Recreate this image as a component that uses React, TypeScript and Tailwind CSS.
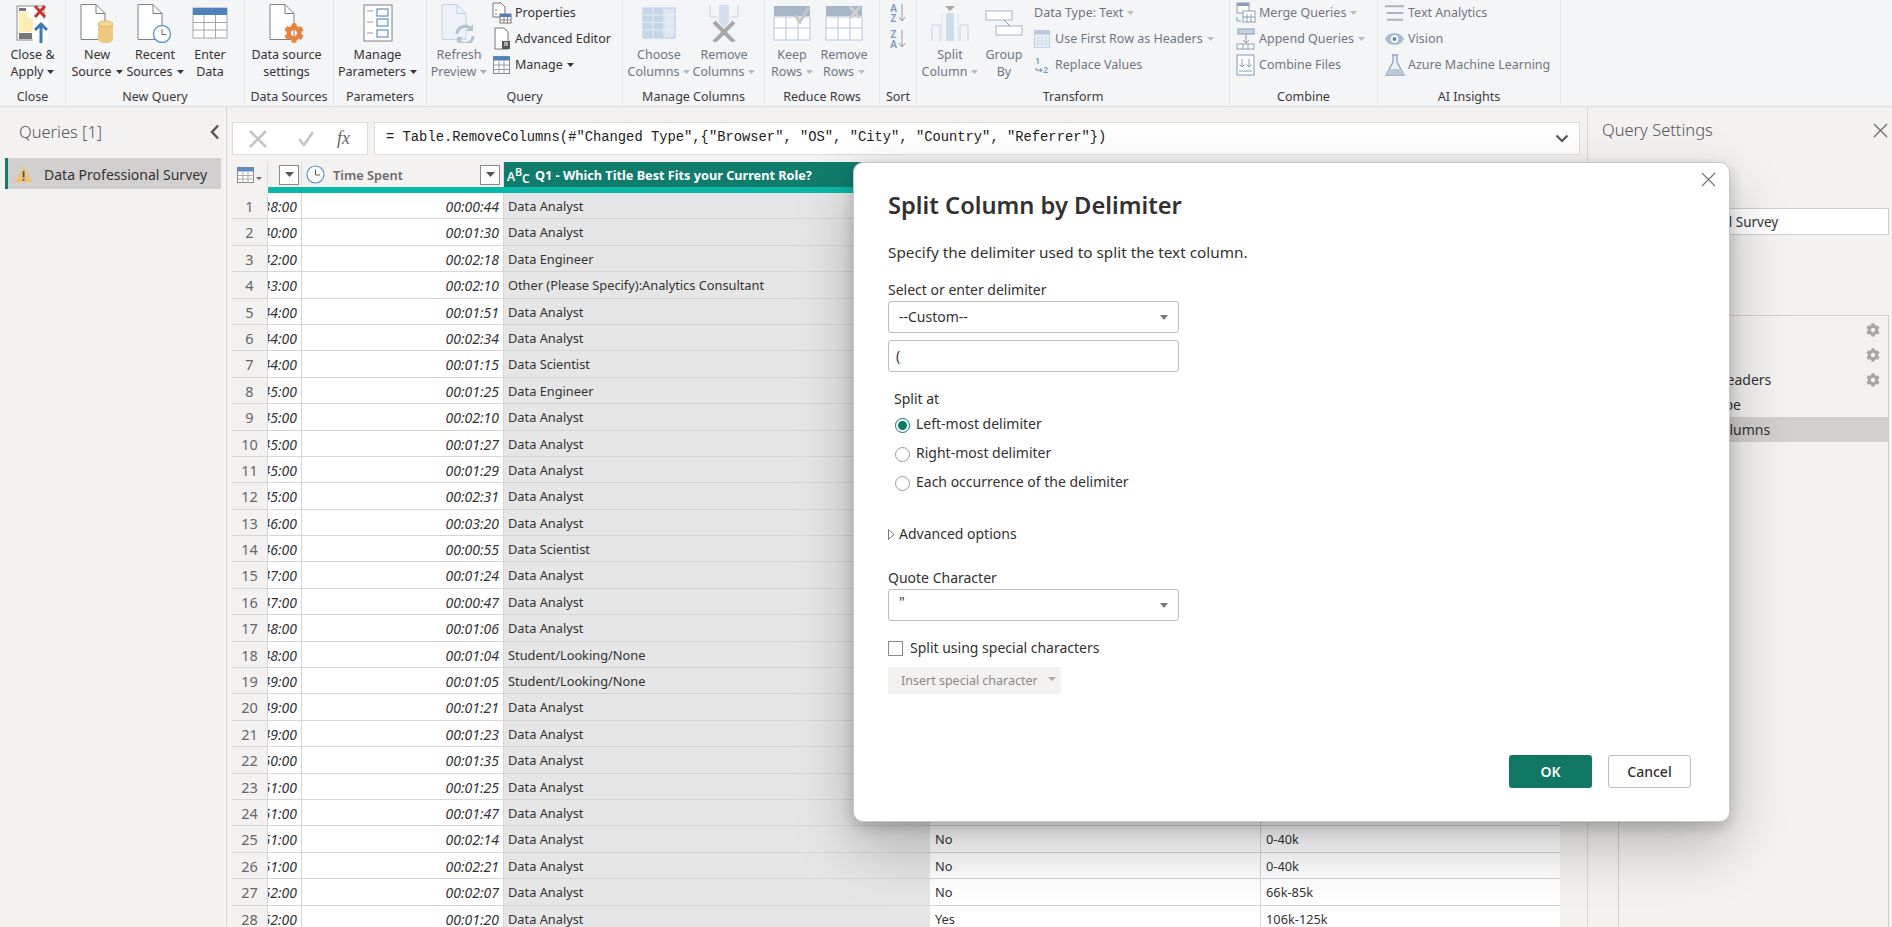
import React from "react";
import { FaCog } from "react-icons/fa";

const S = "font-['Noto_Sans','Open_Sans',sans-serif]";

function Caret({ c = "#333" }: { c?: string }) {
  return (
    <svg width="7" height="4" viewBox="0 0 7 4" className="ml-[4px] inline-block align-middle shrink-0">
      <path d="M0 0h7L3.5 4z" fill={c} />
    </svg>
  );
}

function Page({ c = "#7f7f7f", f = "#fff", x = 1 }: { c?: string; f?: string; x?: number }) {
  return (
    <g>
      <path d={`M${x} 1.5h15l9 9v26h-24z`} fill={f} stroke={c} />
      <path d={`M${x + 15} 1.5v9h9`} fill="none" stroke={c} />
    </g>
  );
}

const CloseApplyIcon = () => (
  <svg width="34" height="40" viewBox="0 0 34 40">
    <rect x="1" y="3" width="27" height="34" fill="#fff" stroke="#8c8c8c" />
    <path d="M3 9h8v5l10 3-6 12H3z" fill="#fbeeb0" />
    <rect x="3" y="5" width="7" height="3" fill="#777" />
    <rect x="3" y="30" width="13" height="6" fill="#777" />
    <rect x="17" y="16" width="15" height="24" fill="#fff" />
    <path d="M19 3l10 11M29 3L19 14" stroke="#c9352f" strokeWidth="3" />
    <path d="M25 40V22M19 27l6-6 6 6" stroke="#3f79b5" strokeWidth="3" fill="none" />
  </svg>
);
const NewSourceIcon = () => (
  <svg width="34" height="40" viewBox="0 0 34 40">
    <Page />
    <path d="M18 21v15c0 2 3 4 8 4s7-2 7-4V21z" fill="#efc97f" />
    <ellipse cx="25.500" cy="21" rx="7.500" ry="3" fill="#f3d795" stroke="#e3b866" />
  </svg>
);
const RecentIcon = () => (
  <svg width="36" height="40" viewBox="0 0 36 40">
    <Page />
    <circle cx="25" cy="31" r="8.500" fill="#fff" stroke="#5a94cc" strokeWidth="1.300" />
    <path d="M25 26v5.500h4.500" fill="none" stroke="#666" />
  </svg>
);
const EnterIcon = () => (
  <svg width="36" height="32" viewBox="0 0 36 32">
    <rect x="1" y="1" width="34" height="30" fill="#fff" stroke="#a6a6a6" />
    <rect x="1" y="1" width="34" height="7" fill="#4f81bd" />
    <path d="M12 8v23M23.500 8v23M1 15.500h34M1 23h34" stroke="#a6a6a6" />
  </svg>
);
const DataSourceIcon = () => (
  <div className="relative w-[36px] h-[40px]">
    <svg width="36" height="40" viewBox="0 0 36 40">
      <Page />
    </svg>
    <FaCog className="absolute left-[15px] top-[20px] text-[#e8813a]" size={20} />
  </div>
);
const ParamsIcon = () => (
  <svg width="30" height="38" viewBox="0 0 30 38">
    <rect x="1" y="1" width="28" height="36" fill="#fff" stroke="#808080" />
    <path d="M4 7h6M4 18h6M4 29h6" stroke="#999" />
    <rect x="14" y="5" width="11" height="7" fill="#fff" stroke="#3a7dbf" />
    <rect x="14" y="15" width="11" height="7" fill="#fff" stroke="#3a7dbf" />
    <rect x="14" y="26" width="11" height="7" fill="#fff" stroke="#3a7dbf" />
  </svg>
);
const RefreshIcon = () => (
  <svg width="36" height="40" viewBox="0 0 36 40">
    <Page c="#c2d2e6" f="#edf2f9" />
    <path d="M16 31a8 8 0 0 1 14-5M32 33a8 8 0 0 1-14 5" fill="none" stroke="#b4c2d1" strokeWidth="3" />
    <path d="M32 21v7h-7zM16 40v-6h6z" fill="#b4c2d1" />
  </svg>
);
const PropIcon = () => (
  <svg width="20" height="22" viewBox="0 0 20 22">
    <path d="M1 1h8l4 4v10H1z" fill="#fff" stroke="#777" />
    <path d="M3 8h2M3 12h2" stroke="#777" />
    <rect x="8" y="12" width="11" height="9" fill="#fff" stroke="#777" />
    <rect x="8" y="12" width="11" height="3" fill="#4f81bd" />
    <path d="M12 15v6M15.500 15v6M8 18h11" stroke="#888" />
  </svg>
);
const AdvIcon = () => (
  <svg width="20" height="24" viewBox="0 0 20 24">
    <path d="M3 1h9l4 4v17H3z" fill="#fff" stroke="#777" />
    <rect x="10" y="14" width="8" height="8" fill="#555" />
    <path d="M12 16h4M12 18h4" stroke="#fff" />
  </svg>
);
const ManageIcon = () => (
  <svg width="18" height="18" viewBox="0 0 18 18">
    <rect x=".500" y=".500" width="16" height="17" fill="#fff" stroke="#888" />
    <rect x=".500" y=".500" width="16" height="4" fill="#4f81bd" />
    <path d="M6 5v13M11 5v13M1 9h16M1 13.500h16" stroke="#999" />
  </svg>
);
const ChooseColsIcon = () => (
  <svg width="34" height="32" viewBox="0 0 34 32">
    <rect x="1" y="1" width="32" height="30" fill="#dfe8f3" stroke="#b7c8dc" />
    <rect x="1" y="1" width="22" height="30" fill="#c6d6e8" />
    <path d="M11 1v30M22 1v30M1 8h32M1 15.500h32M1 23h32" stroke="#e8eef6" />
  </svg>
);
const RemoveColsIcon = () => (
  <svg width="30" height="38" viewBox="0 0 30 38">
    <path d="M1 1v12h8M29 1v12h-8" fill="none" stroke="#c5d3e3" />
    <rect x="10" y="1" width="10" height="18" fill="#d3dfec" />
    <path d="M10 18l5 6 5-6z" fill="#d3dfec" />
    <path d="M5 18l20 20M25 18L5 38" stroke="#a9a9a9" strokeWidth="4" />
  </svg>
);
const RowsGrid = () => (
  <g>
    <rect x="1" y="1" width="36" height="10" fill="#a7b6c9" />
    <rect x="1" y="12" width="36" height="23" fill="#fff" stroke="#b5c6da" />
    <path d="M13 12v23M25 12v23M1 23h36" stroke="#b5c6da" />
  </g>
);
const KeepIcon = () => (
  <svg width="38" height="36" viewBox="0 0 38 36">
    <RowsGrid />
    <path d="M22 10l5 7L36 2" fill="none" stroke="#c7c7c7" strokeWidth="3" />
  </svg>
);
const RemoveRowsIcon = () => (
  <svg width="38" height="36" viewBox="0 0 38 36">
    <RowsGrid />
    <path d="M25 2l10 11M35 2L25 13" stroke="#cfcfcf" strokeWidth="3" />
  </svg>
);
const SortIcon = ({ a, b }: { a: string; b: string }) => (
  <div className="flex items-center h-[22px]">
    <div className="flex flex-col items-center text-[10px] leading-[10px] font-semibold text-[#7d99bd]">
      <span>{a}</span>
      <span>{b}</span>
    </div>
    <svg width="8" height="20" viewBox="0 0 8 20" className="ml-px">
      <path d="M4 1v17M1 14l3 4 3-4" fill="none" stroke="#9a9a9a" />
    </svg>
  </div>
);
const SplitIcon = () => (
  <svg width="38" height="38" viewBox="0 0 38 38">
    <path d="M14 2h10l-5 5z" fill="#a9a9a9" />
    <rect x="15" y="9" width="8" height="28" fill="#cfdcea" />
    <path d="M1 37V21h8v16M29 37V21h8v16" fill="none" stroke="#c5d3e3" />
    <path d="M11 37V9M27 37V9" stroke="#d8e2ee" />
  </svg>
);
const GroupByIcon = () => (
  <svg width="38" height="26" viewBox="0 0 38 26">
    <rect x="1" y="1" width="26" height="9" fill="#fff" stroke="#9fb4cc" />
    <rect x="11" y="16" width="26" height="9" fill="#fff" stroke="#9fb4cc" />
    <path d="M19 10l6 6" stroke="#999" />
  </svg>
);
const FirstRowIcon = () => (
  <svg width="16" height="18" viewBox="0 0 16 18">
    <rect x=".500" y=".500" width="15" height="17" fill="#eef3f9" stroke="#bfcfe1" />
    <rect x=".500" y=".500" width="15" height="4" fill="#b9c7d8" />
    <path d="M4 5v13M8 5v13M12 5v13M1 8h15M1 11h15M1 14h15" stroke="#cfdbe8" />
  </svg>
);
const MergeIcon = () => (
  <svg width="20" height="22" viewBox="0 0 20 22">
    <rect x="1" y="1" width="12" height="10" fill="#fff" stroke="#8a9db2" />
    <rect x="1" y="1" width="12" height="3" fill="#8a9db2" />
    <rect x="7" y="9" width="12" height="11" fill="#fff" stroke="#8a9db2" />
    <path d="M11 12v8M15 12v8M7 15h12M1 15v4h4" stroke="#8a9db2" fill="none" />
  </svg>
);
const AppendIcon = () => (
  <svg width="20" height="22" viewBox="0 0 20 22">
    <rect x="2" y="1" width="16" height="5" fill="#c7d2df" stroke="#8a9db2" />
    <rect x="1" y="16" width="17" height="5" fill="#fff" stroke="#8a9db2" />
    <path d="M10 6v9M7 12l3 3 3-3M7 16v5M12 16v5" stroke="#8a9db2" fill="none" />
  </svg>
);
const CombineIcon = () => (
  <svg width="20" height="22" viewBox="0 0 20 22">
    <rect x="1" y="1" width="17" height="20" fill="#fff" stroke="#7f9cbd" />
    <path d="M6 5v8M3.500 10.500L6 13l2.500-2.500M13 5v8M10.500 10.500L13 13l2.500-2.500M3 17h13" stroke="#7f9cbd" fill="none" />
  </svg>
);
const TextAIIcon = () => (
  <svg width="22" height="18" viewBox="0 0 22 18">
    <path d="M1 2h20M3 9h17M3 16h17" stroke="#a8b4c2" strokeWidth="2" />
  </svg>
);
const VisionIcon = () => (
  <svg width="22" height="14" viewBox="0 0 22 14">
    <path d="M1 7c3-5 6-6 10-6s7 1 10 6c-3 5-6 6-10 6S4 12 1 7z" fill="#a8bbd0" />
    <circle cx="11" cy="7" r="4" fill="#fff" />
    <circle cx="11" cy="7" r="2" fill="#6d7f93" />
  </svg>
);
const FlaskIcon = () => (
  <svg width="20" height="22" viewBox="0 0 20 22">
    <path d="M7 1h6M8 1v7L1 21h18L12 8V1" fill="#eaf0f7" stroke="#8fa3ba" strokeWidth="1.300" />
    <path d="M4 15h12l3 6H1z" fill="#b9c9da" />
  </svg>
);

function Group({ w, label, children }: { w: string; label: string; children: React.ReactNode }) {
  return (
    <div className={`flex flex-col shrink-0 h-[105px] border-r border-[#e3e5e8] ${w}`}>
      <div className="flex h-[88px] overflow-hidden">{children}</div>
      <div className="h-[17px] leading-[18px] text-center text-[12.500px] text-[#3a3a3a]">{label}</div>
    </div>
  );
}

function Large({
  w, icon, l1, l2, caret, dim,
}: { w: string; icon: React.ReactNode; l1?: string; l2?: string; caret?: string; dim?: boolean }) {
  return (
    <div className={`flex flex-col items-center shrink-0 ${w} ${dim ? "text-[#6f7680]" : "text-[#333]"}`}>
      <div className="h-[46px] flex items-center justify-center">{icon}</div>
      <div className="h-[17px] leading-[17px] whitespace-nowrap">{l1}</div>
      <div className="h-[17px] leading-[17px] whitespace-nowrap flex items-center">
        {l2}
        {caret && <Caret c={caret} />}
      </div>
    </div>
  );
}

function Small({
  icon, t, caret, dim, iw = "w-[21px]",
}: { icon?: React.ReactNode; t: string; caret?: string; dim?: boolean; iw?: string }) {
  return (
    <div className={`flex items-center h-[26px] whitespace-nowrap ${dim ? "text-[#6f7680]" : "text-[#333]"}`}>
      <div className={`${iw} flex items-center justify-center shrink-0 mr-[3px]`}>{icon}</div>
      <span>{t}</span>
      {caret && <Caret c={caret} />}
    </div>
  );
}

function Ribbon() {
  return (
    <div className="flex h-[107px] shrink-0 bg-[#f4f5f7] border-b border-[#e0e0e0] text-[12.500px]">
      <Group w="w-[66px]" label="Close">
        <Large w="w-[65px]" icon={<CloseApplyIcon />} l1="Close &" l2="Apply" caret="#333" />
      </Group>
      <Group w="w-[179px]" label="New Query">
        <div className="w-[2px]" />
        <Large w="w-[58px]" icon={<NewSourceIcon />} l1="New" l2="Source" caret="#333" />
        <Large w="w-[58px]" icon={<RecentIcon />} l1="Recent" l2="Sources" caret="#333" />
        <Large w="w-[52px]" icon={<EnterIcon />} l1="Enter" l2="Data" />
      </Group>
      <Group w="w-[89px]" label="Data Sources">
        <Large w="w-[83px]" icon={<DataSourceIcon />} l1="Data source" l2="settings" />
      </Group>
      <Group w="w-[93px]" label="Parameters">
        <Large w="w-[87px]" icon={<ParamsIcon />} l1="Manage" l2="Parameters" caret="#333" />
      </Group>
      <Group w="w-[196px]" label="Query">
        <Large w="w-[64px]" dim icon={<RefreshIcon />} l1="Refresh" l2="Preview" caret="#aaa" />
        <div className="flex flex-col">
          <Small icon={<PropIcon />} t="Properties" />
          <Small icon={<AdvIcon />} t="Advanced Editor" />
          <Small icon={<ManageIcon />} t="Manage" caret="#333" />
        </div>
      </Group>
      <Group w="w-[142px]" label="Manage Columns">
        <div className="w-[2px]" />
        <Large w="w-[68px]" dim icon={<ChooseColsIcon />} l1="Choose" l2="Columns" caret="#bbb" />
        <Large w="w-[62px]" dim icon={<RemoveColsIcon />} l1="Remove" l2="Columns" caret="#bbb" />
      </Group>
      <Group w="w-[115px]" label="Reduce Rows">
        <Large w="w-[54px]" dim icon={<KeepIcon />} l1="Keep" l2="Rows" caret="#bbb" />
        <Large w="w-[50px]" dim icon={<RemoveRowsIcon />} l1="Remove" l2="Rows" caret="#bbb" />
      </Group>
      <Group w="w-[37px]" label="Sort">
        <div className="flex flex-col items-center w-full pt-[2px] gap-[4px]">
          <SortIcon a="A" b="Z" />
          <SortIcon a="Z" b="A" />
        </div>
      </Group>
      <Group w="w-[313px]" label="Transform">
        <Large w="w-[66px]" dim icon={<SplitIcon />} l1="Split" l2="Column" caret="#bbb" />
        <Large w="w-[42px]" dim icon={<GroupByIcon />} l1="Group" l2="By" />
        <div className="flex flex-col ml-[6px]">
          <Small iw="w-0" dim t="Data Type: Text" caret="#bbb" />
          <Small iw="w-[21px]" dim icon={<FirstRowIcon />} t="Use First Row as Headers" caret="#bbb" />
          <Small
            iw="w-[21px]"
            dim
            icon={
              <span className="flex flex-col text-[9px] leading-[9px] font-semibold text-[#7d99bd]">
                <span>1</span>
                <span>↪2</span>
              </span>
            }
            t="Replace Values"
          />
        </div>
      </Group>
      <Group w="w-[148px]" label="Combine">
        <div className="flex flex-col ml-[5px]">
          <Small dim icon={<MergeIcon />} t="Merge Queries" caret="#bbb" />
          <Small dim icon={<AppendIcon />} t="Append Queries" caret="#bbb" />
          <Small dim icon={<CombineIcon />} t="Combine Files" />
        </div>
      </Group>
      <Group w="w-[183px]" label="AI Insights">
        <div className="flex flex-col ml-[6px]">
          <Small dim icon={<TextAIIcon />} t="Text Analytics" />
          <Small dim icon={<VisionIcon />} t="Vision" />
          <Small dim icon={<FlaskIcon />} t="Azure Machine Learning" />
        </div>
      </Group>
    </div>
  );
}

const RAW: [string, string, string, string?, string?][] = [
  ["38:00", "00:00:44", "Data Analyst"],
  ["40:00", "00:01:30", "Data Analyst"],
  ["42:00", "00:02:18", "Data Engineer"],
  ["43:00", "00:02:10", "Other (Please Specify):Analytics Consultant"],
  ["44:00", "00:01:51", "Data Analyst"],
  ["44:00", "00:02:34", "Data Analyst"],
  ["44:00", "00:01:15", "Data Scientist"],
  ["45:00", "00:01:25", "Data Engineer"],
  ["45:00", "00:02:10", "Data Analyst"],
  ["45:00", "00:01:27", "Data Analyst"],
  ["45:00", "00:01:29", "Data Analyst"],
  ["45:00", "00:02:31", "Data Analyst"],
  ["46:00", "00:03:20", "Data Analyst"],
  ["46:00", "00:00:55", "Data Scientist"],
  ["47:00", "00:01:24", "Data Analyst"],
  ["47:00", "00:00:47", "Data Analyst"],
  ["48:00", "00:01:06", "Data Analyst"],
  ["48:00", "00:01:04", "Student/Looking/None"],
  ["49:00", "00:01:05", "Student/Looking/None"],
  ["49:00", "00:01:21", "Data Analyst"],
  ["49:00", "00:01:23", "Data Analyst"],
  ["50:00", "00:01:35", "Data Analyst"],
  ["51:00", "00:01:25", "Data Analyst"],
  ["51:00", "00:01:47", "Data Analyst"],
  ["51:00", "00:02:14", "Data Analyst", "No", "0-40k"],
  ["51:00", "00:02:21", "Data Analyst", "No", "0-40k"],
  ["52:00", "00:02:07", "Data Analyst", "No", "66k-85k"],
  ["52:00", "00:01:20", "Data Analyst", "Yes", "106k-125k"],
];

function FilterBtn() {
  return (
    <div className="w-[20px] h-[20px] border border-[#8a8a8a] bg-[#fff] flex items-center justify-center shrink-0">
      <svg width="9" height="5" viewBox="0 0 9 5"><path d="M0 0h9L4.500 5z" fill="#555" /></svg>
    </div>
  );
}

function Table() {
  return (
    <div className="w-[1328px] mt-[7px] text-[12.800px]">
      <div className="flex h-[25px] bg-[#f3f2f1]">
        <div className="w-[36px] flex items-center justify-center border-r border-[#dcdcdc]">
          <svg width="26" height="16" viewBox="0 0 26 16">
            <rect x=".500" y=".500" width="16" height="15" fill="#fff" stroke="#888" />
            <rect x=".500" y=".500" width="16" height="4" fill="#5b8cc4" />
            <path d="M6 5v11M11 5v11M1 8.500h16M1 12h16" stroke="#aaa" />
            <path d="M19 10h6l-3 3z" fill="#666" />
          </svg>
        </div>
        <div className="w-[34px] flex items-center justify-end pr-[2px] border-r border-[#dcdcdc]"><FilterBtn /></div>
        <div className="w-[202px] flex items-center border-r border-[#dcdcdc] pl-[4px] pr-[3px]">
          <svg width="19" height="19" viewBox="0 0 19 19" className="shrink-0">
            <circle cx="9.500" cy="9.500" r="8.500" fill="#fff" stroke="#5a94cc" strokeWidth="1.200" />
            <path d="M9.500 4.500v5.500h4.500" fill="none" stroke="#555" />
          </svg>
          <span className="ml-[8px] pt-[2px] flex-1 font-semibold text-[#6b6b6b]">Time Spent</span>
          <FilterBtn />
        </div>
        <div className="w-[426px] bg-[#107c6b] text-white font-bold flex items-center pl-[3px] whitespace-nowrap">
          <span className="relative w-[26px] h-[21px] font-semibold text-[12px] shrink-0">
            <span className="absolute left-0 top-[4px]">A</span>
            <span className="absolute left-[8px] top-0 text-[11px]">B</span>
            <span className="absolute left-[15px] top-[6px]">C</span>
          </span>
          <span className="ml-[2px] pt-[2px] text-[12.700px]">Q1 - Which Title Best Fits your Current Role?</span>
        </div>
      </div>
      <div className="flex h-[6px]">
        <div className="w-[36px] bg-[#f3f2f1]" />
        <div className="flex-1 bg-[#0ab8a9]" />
      </div>
      {RAW.map((r, i) => (
        <div key={i} className="flex h-[26.400px] leading-[27px] border-b border-[#d6d6d6] bg-white text-[#333]">
          <div className="w-[36px] text-center bg-[#f3f2f1] text-[14.500px] text-[#666] border-r border-[#d6d6d6]">{i + 1}</div>
          <div className="w-[34px] flex justify-end pr-[4px] overflow-hidden italic text-[14px] border-r border-[#d6d6d6] whitespace-nowrap">{r[0]}</div>
          <div className="w-[202px] text-right pr-[4px] italic text-[14px] border-r border-[#d6d6d6]">{r[1]}</div>
          <div className="w-[426px] pl-[4px] bg-[#e6e6e6] whitespace-nowrap">{r[2]}</div>
          <div className="w-[331px] pl-[5px] border-r border-[#d6d6d6]">{r[3]}</div>
          <div className="flex-1 pl-[5px]">{r[4]}</div>
        </div>
      ))}
    </div>
  );
}

function FormulaBar() {
  return (
    <div className="flex gap-[6px] pt-[15px] w-[1348px]">
      <div className="w-[136px] h-[33px] bg-white border border-[#dcdcdc] flex items-center shrink-0 pl-[15px]">
        <svg width="20" height="20" viewBox="0 0 20 20"><path d="M2 2l16 16M18 2L2 18" stroke="#c4c4c4" strokeWidth="2.500" /></svg>
        <svg width="18" height="16" viewBox="0 0 18 16" className="ml-[29px]"><path d="M2 8l5 6L16 1" fill="none" stroke="#c4c4c4" strokeWidth="2.500" /></svg>
        <span className="ml-[22px] font-['Liberation_Serif',serif] italic text-[18px] text-[#666]">fx</span>
      </div>
      <div className="flex-1 h-[33px] bg-white border border-[#dcdcdc] flex items-center pl-[11px] pr-[10px]">
        <span className="flex-1 font-['Liberation_Mono',monospace] text-[13.800px] text-[#222] whitespace-pre">{'= Table.RemoveColumns(#"Changed Type",{"Browser", "OS", "City", "Country", "Referrer"})'}</span>
        <svg width="14" height="9" viewBox="0 0 14 9"><path d="M1.500 1.500L7 7l5.500-5.500" fill="none" stroke="#555" strokeWidth="2.200" /></svg>
      </div>
    </div>
  );
}

function LeftPane() {
  return (
    <div className="w-[227px] shrink-0 border-r border-[#d8d8d8] bg-[#f3f2f1] pl-[5px] pr-[5px]">
      <div className="flex items-center justify-between h-[51px] pl-[14px] pr-[1px] pb-[1px]">
        <span className="text-[16.500px] font-light text-[#555]">Queries [1]</span>
        <svg width="10" height="16" viewBox="0 0 10 16"><path d="M8 1.500L2 8l6 6.500" fill="none" stroke="#555" strokeWidth="2.500" /></svg>
      </div>
      <div className="flex items-center h-[31px] bg-[#d2d0ce] border-l-[3px] border-[#107c6b] pl-[6px]">
        <svg width="19" height="18" viewBox="0 0 19 18">
          <path d="M9.500 1L18.500 17.500H.500z" fill="#eec27d" />
          <rect x="8.700" y="6" width="1.800" height="6.500" fill="#555" />
          <rect x="8.700" y="14" width="1.800" height="1.800" fill="#555" />
        </svg>
        <span className="ml-[11px] pt-[2px] text-[14px] text-[#333] whitespace-nowrap">Data Professional Survey</span>
      </div>
    </div>
  );
}

function RightPane() {
  const steps = ["Source", "Navigation", "Promoted Headers", "Changed Type", "Removed Columns"];
  return (
    <div className="flex-1 border-l border-[#d8d8d8] bg-[#f3f2f1] pr-[3px]">
      <div className="flex items-center justify-between h-[46px] pl-[14px] pr-[1px]">
        <span className="text-[16.500px] font-light text-[#555] pt-[1px]">Query Settings</span>
        <svg width="15" height="15" viewBox="0 0 15 15"><path d="M1 1l13 13M14 1L1 14" stroke="#666" strokeWidth="1.200" /></svg>
      </div>
      <div className="ml-[30px] mt-[55px] h-[27px] bg-white border border-[#d2d0ce] leading-[27px] text-[13.500px] text-[#333] whitespace-nowrap overflow-hidden pl-[2px]">
        Data Professional Survey
      </div>
      <div className="ml-[30px] mt-[80px] h-[620px] border border-[#d2d0ce] pt-[1px] text-[14px] text-[#333]">
        {steps.map((s, i) => (
          <div key={s} className={`flex items-center justify-between h-[25px] pl-[28px] pr-[8px] ${i === 4 ? "bg-[#d2d0ce]" : ""}`}>
            <span>{s}</span>
            {i < 3 && <FaCog className="text-[#a6a6a6]" size={14} />}
          </div>
        ))}
      </div>
    </div>
  );
}

function Select({ v, mono }: { v: string; mono?: boolean }) {
  return (
    <div className="flex items-center justify-between w-[291px] h-[32px] border border-[#bdbdbd] rounded-[3px] bg-white pl-[10px] pr-[10px]">
      <span className={mono ? "self-start leading-[24px]" : ""}>{v}</span>
      <svg width="8" height="5" viewBox="0 0 8 5"><path d="M0 0h8L4 5z" fill="#777" /></svg>
    </div>
  );
}

function Radio({ on, t }: { on?: boolean; t: string }) {
  return (
    <div className="flex items-center h-[29px] whitespace-nowrap">
      <div className={`w-[15px] h-[15px] rounded-full border flex items-center justify-center mt-[2px] ${on ? "border-[#117865]" : "border-[#999]"}`}>
        {on && <div className="w-[9px] h-[9px] rounded-full bg-[#117865]" />}
      </div>
      <span className="ml-[6px] -mt-[2px]">{t}</span>
    </div>
  );
}

function Dialog() {
  return (
    <div className="absolute left-[853px] top-[162px] w-[877px] h-[660px] bg-white rounded-[10px] border border-[#c8c8c8] shadow-[0_25px_58px_rgba(0,0,0,0.24),0_5px_14px_rgba(0,0,0,0.18)] pl-[34px] text-[14px] text-[#323130] leading-[20px]">
      <svg width="15" height="15" viewBox="0 0 15 15" className="absolute right-[13px] top-[9px]"><path d="M1 1l13 13M14 1L1 14" stroke="#777" strokeWidth="1.200" /></svg>
      <div className="pt-[25px] h-[71px] text-[23.700px] leading-[34px] font-semibold text-[#323130]">Split Column by Delimiter</div>
      <div className="h-[20px] mt-[8px] text-[15.300px]">Specify the delimiter used to split the text column.</div>
      <div className="mt-[18px] h-[20px] text-[14px]">Select or enter delimiter</div>
      <div className="mt-[1px]"><Select v="--Custom--" /></div>
      <div className="mt-[7px] w-[291px] h-[32px] border border-[#bdbdbd] rounded-[3px] pl-[7px] leading-[30px]">(</div>
      <div className="mt-[17px] ml-[6px] h-[20px]">Split at</div>
      <div className="ml-[7px] mt-[1px]">
        <Radio on t="Left-most delimiter" />
        <Radio t="Right-most delimiter" />
        <Radio t="Each occurrence of the delimiter" />
      </div>
      <div className="flex items-center mt-[27px] h-[20px]">
        <svg width="7" height="11" viewBox="0 0 7 11"><path d="M.500.500L6 5.500l-5.500 5z" fill="none" stroke="#777" /></svg>
        <span className="ml-[4px]">Advanced options</span>
      </div>
      <div className="mt-[24px] h-[20px]">Quote Character</div>
      <div className="mt-[1px]"><Select v={'"'} mono /></div>
      <div className="flex items-center mt-[17px] h-[20px]">
        <div className="w-[15px] h-[15px] border border-[#8a8a8a]" />
        <span className="ml-[7px]">Split using special characters</span>
      </div>
      <div className="mt-[9px] w-[173px] h-[27px] bg-[#f3f2f1] text-[#8a8886] text-[12.500px] flex items-center pl-[13px]">
        Insert special character
        <svg width="8" height="4" viewBox="0 0 8 4" className="ml-[10px] mb-[3px]"><path d="M0 0h8L4 4z" fill="#aaa" /></svg>
      </div>
      <div className="flex justify-end gap-[16px] pr-[38px] mt-[61px]">
        <div className="w-[83px] h-[33px] rounded-[3px] bg-[#117865] text-white font-semibold flex items-center justify-center">OK</div>
        <div className="w-[83px] h-[33px] rounded-[3px] bg-white border border-[#bdbdbd] font-medium flex items-center justify-center">Cancel</div>
      </div>
    </div>
  );
}

export default function App() {
  return (
    <div className={`relative w-[1892px] h-[927px] overflow-hidden flex flex-col bg-[#f3f2f1] ${S}`}>
      <Ribbon />
      <div className="flex flex-1 min-h-0">
        <LeftPane />
        <div className="w-[1360px] shrink-0 pl-[5px]">
          <FormulaBar />
          <Table />
        </div>
        <RightPane />
      </div>
      <Dialog />
    </div>
  );
}
